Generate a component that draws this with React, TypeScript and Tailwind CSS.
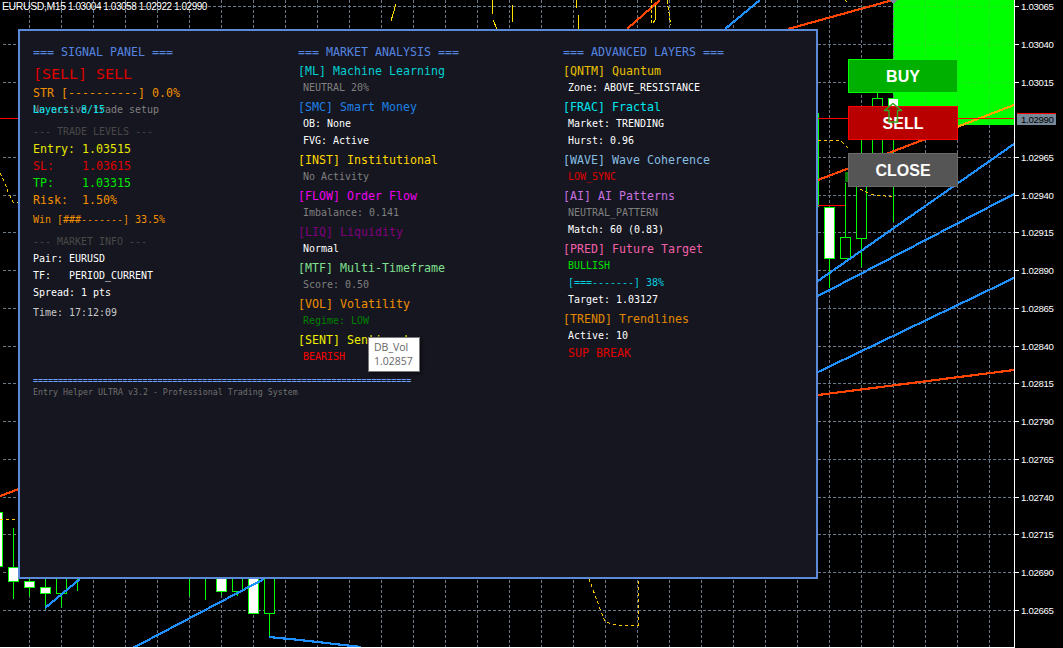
const H = "h-4 leading-4 whitespace-pre text-[11.63px]";
const S = "h-4 leading-[18px] whitespace-pre text-[9.97px]";
const C = "h-4 leading-[18px] whitespace-pre text-[9.97px] pl-[5px]";
const HEAD = "h-4 leading-4 whitespace-pre text-[11.63px] text-[#5585e0]";

const vx: number[] = [];
for (let x = 29; x <= 989; x += 32) vx.push(x);
const ticks: [number, string][] = [
  [6, "1.03065"], [44, "1.03040"], [82, "1.03015"], [157, "1.02965"], [195, "1.02940"], [232, "1.02915"],
  [270, "1.02890"], [308, "1.02865"], [346, "1.02840"], [383, "1.02815"], [421, "1.02790"], [459, "1.02765"],
  [497, "1.02740"], [534, "1.02715"], [572, "1.02690"], [610, "1.02665"],
];
// x, bodyTop, bodyBottom, wickTop, wickBottom, white
const candles: [number, number, number, number, number, boolean][] = [
  [-3, 512, 566, 512, 566, true], [13, 567, 581, 528, 599, true], [29, 581, 587, 579, 596, true],
  [45, 587, 593, 579, 610, true], [61, 570, 593, 570, 607, false], [221, 570, 591, 570, 595, true],
  [237, 570, 591, 570, 596, false], [253, 570, 613, 570, 613, true], [269, 570, 613, 570, 637, false],
  [829, 207, 258, 207, 288, true], [845, 237, 258, 183, 258, false], [861, 153, 238, 140, 267, false],
  [877, 98, 153, 93, 153, false], [893, 98, 125, 98, 222, true],
];

function Chart() {
  return (
    <svg className="absolute left-0 top-0" width={1063} height={648} fontFamily="'Liberation Sans', sans-serif">
      <g shapeRendering="crispEdges">
        <rect x={893} y={0} width={121} height={125} fill="#00ff00" />
        {vx.map((x) => (
          <line key={x} x1={x + 0.5} y1={0} x2={x + 0.5} y2={647} stroke="#6a7a89" strokeDasharray="3 2" />
        ))}
        {ticks.map(([y]) => (
          <line key={y} x1={3} y1={y + 0.5} x2={1014} y2={y + 0.5} stroke="#6a7a89" strokeDasharray="3 2" />
        ))}
        {[925, 957, 989].map((x) => (
          <line key={x} x1={x + 0.5} y1={0} x2={x + 0.5} y2={125} stroke="#20e020" strokeDasharray="3 2" />
        ))}
        {[6, 44, 82].map((y) => (
          <line key={y} x1={893} y1={y + 0.5} x2={1014} y2={y + 0.5} stroke="#20e020" strokeDasharray="3 2" />
        ))}

        <line x1={77.5} y1={579} x2={77.5} y2={591} stroke="#00ff00" />
        <line x1={189.5} y1={579} x2={189.5} y2={596} stroke="#00ff00" />
        <line x1={205.5} y1={579} x2={205.5} y2={600} stroke="#00ff00" />
        <rect x={845} y={172} width={4} height={10} fill="#008000" />
        {candles.map(([x, t, b, wt, wb, white]) => (
          <g key={x}>
            <line x1={x + 0.5} y1={wt} x2={x + 0.5} y2={wb} stroke="#00ff00" />
            <rect x={x - 4.5} y={t + 0.5} width={10} height={b - t} fill={white ? "#ffffff" : "#000000"} stroke="#00ff00" />
          </g>
        ))}
        <line x1={818.5} y1={113} x2={818.5} y2={207} stroke="#00ff00" />
        <line x1={818} y1={205.5} x2={845} y2={205.5} stroke="#ff0000" />

        {/* orange and blue trend lines */}
        <g strokeWidth={2.2} fill="none">
          <line x1={0} y1={496} x2={19} y2={489} stroke="#ff4500" />
          <line x1={627} y1={29} x2={660} y2={0} stroke="#ff4500" />
          <line x1={788} y1={29} x2={893} y2={0} stroke="#ff4500" />
          <line x1={818} y1={180} x2={949} y2={130} stroke="#ff4500" />
          <line x1={949} y1={130} x2={1014} y2={105} stroke="#ffa500" />
          <line x1={818} y1={395} x2={1014} y2={370} stroke="#ff4500" />
          <line x1={725} y1={29} x2={760} y2={0} stroke="#1e90ff" />
          <line x1={818} y1={281} x2={1014} y2={144} stroke="#1e90ff" />
          <line x1={818} y1={296} x2={1014} y2={194} stroke="#1e90ff" />
          <line x1={818} y1={372} x2={1014} y2={278} stroke="#1e90ff" />
          <line x1={45} y1={608} x2={80} y2={579} stroke="#1e90ff" />
          <line x1={133} y1={648} x2={264} y2={579} stroke="#1e90ff" />
          <polyline points="269,637 300,640 361,647" stroke="#1e90ff" />
        </g>
        <line x1={0} y1={118.5} x2={19} y2={118.5} stroke="#ff0000" />
        <line x1={818} y1={118.5} x2={1014} y2={118.5} stroke="#ff0000" />

        {/* yellow wave */}
        <g fill="none" stroke="#ffe000">
          <polyline points="396,4 391,21" />
          <polyline points="492,0 492,14" />
          <polyline points="493,20 497,29" />
          <polyline points="513,5 512,22" />
          <polyline points="576,0 577,8" />
          <polyline points="578,15 579,29" />
          <polyline points="652,0 651,25" strokeDasharray="3 2" />
          <polyline points="656,5 655,20 653,23" />
          <polyline points="667,0 670,20 671,25" strokeDasharray="4 2" />
          <polyline points="845,0 847,2" />
        </g>
        <g fill="none" stroke="#ffc800" strokeDasharray="3 3">
          <polyline points="0,173 5,183 8,192 13,202 18,202" />
          <line x1={0} y1={519.5} x2={18} y2={519.5} />
          <polyline points="818,140 840,140 848,148" />
          <polyline points="860,189 870,194 892,197" />
          <polyline points="589,579 605,622 620,626 635,625 638,625 638,579" />
        </g>
        <polygon points="890,0 897,0 893,4" fill="#778899" />

        {/* axis */}
        <line x1={1014.5} y1={0} x2={1014.5} y2={648} stroke="#ffffff" />
        <line x1={0} y1={647.5} x2={1014} y2={647.5} stroke="#ffffff" />
        {ticks.map(([y]) => (
          <line key={y} x1={1014} y1={y + 0.5} x2={1019} y2={y + 0.5} stroke="#ffffff" />
        ))}
        <rect x={1017} y={113} width={39} height={12} fill="#778899" />
        <rect x={1017} y={113} width={39} height={1} fill="#ff0000" />
      </g>
      {ticks.map(([y, t]) => (
        <text key={t} x={1021} y={y + 4} fill="#ffffff" fontSize={9.6} letterSpacing={-0.3}>{t}</text>
      ))}
      <text x={1021} y={123} fill="#000000" fontSize={9.6} letterSpacing={-0.3}>1.02990</text>
      <text x={2} y={10} fill="#ffffff" fontSize={10.5} letterSpacing={-0.4}>EURUSD,M15</text>
      <text x={68} y={10} fill="#ffffff" fontSize={10} letterSpacing={-0.45}>1.03004 1.03058 1.02922 1.02990</text>
    </svg>
  );
}

function Panel() {
  return (
    <div className="absolute left-[18px] top-[29px] w-[800px] h-[550px] border-2 border-[#5b8ad9] bg-[#15161f] pl-[13px] pt-[13px] font-['DejaVu_Sans_Mono',monospace] text-white">
      <div className="grid grid-cols-[265px_265px_1fr]">
        <div className="flex flex-col">
          <div className={HEAD}>=== SIGNAL PANEL ===</div>
          <div className="mt-1 h-5 leading-5 whitespace-pre text-[14.95px] text-[#e00000]">[SELL] SELL</div>
          <div className={`mt-px ${H} text-[#f09000]`}>STR [----------] 0.0%</div>
          <div className="relative">
            <div className={`${S} text-[#808080]`}>No active trade setup</div>
            <div className={`absolute left-0 top-0 ${S} text-[#00e5ee]`}>Layers: 8/15</div>
          </div>
          <div className={`mt-1.5 ${S} text-[#484848]`}>--- TRADE LEVELS ---</div>
          <div className={`mt-0.5 ${H} text-[#e8e800]`}>Entry: 1.03515</div>
          <div className={`mt-px ${H} text-[#e00000]`}>SL:    1.03615</div>
          <div className={`mt-px ${H} text-[#00e800]`}>TP:    1.03315</div>
          <div className={`mt-px ${H} text-[#f09000]`}>Risk:  1.50%</div>
          <div className={`mt-[3px] ${S} text-[#f09000]`}>Win [###-------] 33.5%</div>
          <div className={`mt-1.5 ${S} text-[#484848]`}>--- MARKET INFO ---</div>
          <div className={`mt-px ${S} text-white`}>Pair: EURUSD</div>
          <div className={`mt-px ${S} text-white`}>TF:   PERIOD_CURRENT</div>
          <div className={`mt-px ${S} text-white`}>Spread: 1 pts</div>
          <div className={`mt-1 ${S} text-[#c8c8c8]`}>Time: 17:12:09</div>
        </div>

        <div className="flex flex-col">
          <div className={HEAD}>=== MARKET ANALYSIS ===</div>
          <div className={`mt-[3px] ${H} text-[#00ced1]`}>[ML] Machine Learning</div>
          <div className={`${C} text-[#808080]`}>NEUTRAL 20%</div>
          <div className={`mt-1 ${H} text-[#1e80e8]`}>[SMC] Smart Money</div>
          <div className={`${C} text-white`}>OB: None</div>
          <div className={`mt-px ${C} text-white`}>FVG: Active</div>
          <div className={`mt-1 ${H} text-[#ffd700]`}>[INST] Institutional</div>
          <div className={`${C} text-[#808080]`}>No Activity</div>
          <div className={`mt-1 ${H} text-[#f000f0]`}>[FLOW] Order Flow</div>
          <div className={`${C} text-[#808080]`}>Imbalance: 0.141</div>
          <div className={`mt-1 ${H} text-[#800080]`}>[LIQ] Liquidity</div>
          <div className={`${C} text-white`}>Normal</div>
          <div className={`mt-1 ${H} text-[#80e090]`}>[MTF] Multi-Timeframe</div>
          <div className={`${C} text-[#808080]`}>Score: 0.50</div>
          <div className={`mt-1 ${H} text-[#f09000]`}>[VOL] Volatility</div>
          <div className={`${C} text-[#008000]`}>Regime: LOW</div>
          <div className={`mt-1 ${H} text-[#f0f000]`}>[SENT] Sentiment</div>
          <div className={`${C} text-[#ff0000]`}>BEARISH</div>
        </div>

        <div className="flex flex-col">
          <div className={HEAD}>=== ADVANCED LAYERS ===</div>
          <div className={`mt-[3px] ${H} text-[#e8c000]`}>[QNTM] Quantum</div>
          <div className={`${C} text-white`}>Zone: ABOVE_RESISTANCE</div>
          <div className={`mt-1 ${H} text-[#00e5ee]`}>[FRAC] Fractal</div>
          <div className={`${C} text-white`}>Market: TRENDING</div>
          <div className={`mt-px ${C} text-white`}>Hurst: 0.96</div>
          <div className={`mt-1 ${H} text-[#87bde0]`}>[WAVE] Wave Coherence</div>
          <div className={`${C} text-[#e00000]`}>LOW_SYNC</div>
          <div className={`mt-1 ${H} text-[#c870e0]`}>[AI] AI Patterns</div>
          <div className={`${C} text-[#808080]`}>NEUTRAL_PATTERN</div>
          <div className={`mt-px ${C} text-white`}>Match: 60 (0.83)</div>
          <div className={`mt-1 ${H} text-[#f060a8]`}>[PRED] Future Target</div>
          <div className={`${C} text-[#00e000]`}>BULLISH</div>
          <div className={`mt-px ${C} text-[#00d0e0]`}>[===-------] 38%</div>
          <div className={`mt-px ${C} text-white`}>Target: 1.03127</div>
          <div className={`mt-1 ${H} text-[#e08800]`}>[TREND] Trendlines</div>
          <div className={`${C} text-white`}>Active: 10</div>
          <div className={`mt-0.5 h-4 leading-4 whitespace-pre text-[11.63px] pl-[5px] text-[#e00000]`}>SUP BREAK</div>
        </div>
      </div>
      <div className="mt-[10px] h-3 leading-3 whitespace-pre text-[8.28px] font-bold text-[#6fa0ff]">============================================================================</div>
      <div className="h-3 leading-3 whitespace-pre text-[8.3px] text-[#707070]">Entry Helper ULTRA v3.2 - Professional Trading System</div>
    </div>
  );
}

function Buttons() {
  return (
    <div className="absolute left-[848px] top-[59px] w-[110px] flex flex-col gap-[13px] font-['Liberation_Sans',sans-serif] text-base font-bold text-white">
      <div className="h-[34px] w-[109px] pt-px flex items-center justify-center bg-[#00b000] border border-r-0 border-[#00ff00]">BUY</div>
      <div className="h-[34px] pt-px flex items-center justify-center bg-[#b80000] border border-[#ff0000]">SELL</div>
      <div className="h-[34px] pt-px flex items-center justify-center bg-[#555555] border border-[#6a6a6a]">CLOSE</div>
    </div>
  );
}

export default function App() {
  return (
    <div className="relative w-[1063px] h-[648px] overflow-hidden bg-black">
      <Chart />
      <Panel />
      <Buttons />
      <svg className="absolute left-[884px] top-[103px]" width={18} height={20}>
        <path d="M9 .5 L17.5 7.5 L13.5 7.5 L13.5 19 L5 19 L5 7.5 L.5 7.5 Z" fill="none" stroke="#2fa81f" strokeWidth={1.4} />
      </svg>
      <div className="absolute left-[368px] top-[337px] w-[52px] h-[35px] border border-[#7a7a7a] bg-white px-[5px] pt-[2px] font-['Open_Sans',sans-serif] text-[10.5px] leading-[14px] text-[#666666] shadow-[2px_2px_3px_rgba(0,0,0,0.4)]">
        <div>DB_Vol</div>
        <div>1.02857</div>
      </div>
    </div>
  );
}
